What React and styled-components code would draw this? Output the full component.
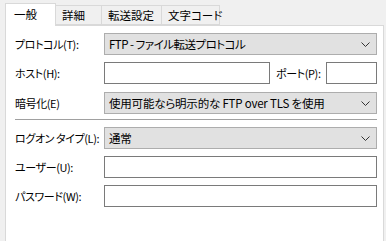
import React from "react";
import styled, { createGlobalStyle } from "styled-components";

const Global = createGlobalStyle`
  html, body {
    margin: 0;
    padding: 0;
    background: #f0f0f0;
    font-family: "Noto Sans CJK JP", "Noto Sans", sans-serif;
    font-size: 12px;
    color: #000;
  }
`;

const Page = styled.div`
  width: 386px;
  height: 241px;
  overflow: hidden;
  padding: 3px 3px 0 5px;
  box-sizing: border-box;
`;

const Tabs = styled.div`
  display: flex;
  align-items: flex-end;
  height: 22px;
  position: relative;
  z-index: 1;
`;

const Tab = styled.div`
  box-sizing: border-box;
  width: ${(p) => p.w}px;
  height: ${(p) => (p.active ? 23 : 20)}px;
  margin-bottom: ${(p) => (p.active ? -1 : 0)}px;
  background: ${(p) => (p.active ? "#fff" : "#f0f0f0")};
  border: 1px solid #d9d9d9;
  border-bottom: ${(p) => (p.active ? "none" : "1px solid #d9d9d9")};
  border-left: ${(p) => (p.first || p.active ? "1px solid #d9d9d9" : "none")};
  display: flex;
  align-items: center;
  padding-left: ${(p) => (p.active ? 8 : 6)}px;
  padding-top: ${(p) => (p.active ? 0 : 1)}px;
  line-height: 1;
  white-space: nowrap;
  font-size: 11.5px;
  font-feature-settings: "palt" 1;
`;

const Panel = styled.div`
  box-sizing: border-box;
  height: 230px;
  width: 379px;
  background: #fff;
  border: 1px solid #d9d9d9;
  padding: 7px 6px 0 9px;
  display: flex;
  flex-direction: column;
`;

const Row = styled.div`
  display: flex;
  align-items: center;
  height: 22px;
  margin-top: ${(p) => p.mt || 0}px;
`;

const Label = styled.div`
  width: 89px;
  flex: none;
  white-space: nowrap;
  font-size: 11px;
  letter-spacing: -0.4px;
  font-feature-settings: "palt" 1;
`;

const Select = styled.div`
  box-sizing: border-box;
  flex: 1;
  height: 22px;
  background: #e1e1e1;
  border: 1px solid #adadad;
  display: flex;
  align-items: center;
  padding-left: 4px;
  padding-right: 6px;
  white-space: nowrap;
`;

const SelectText = styled.span`
  flex: 1;
  font-size: 11.5px;
  letter-spacing: ${(p) => (p.tight ? -0.5 : -0.2)}px;
  font-feature-settings: "palt" 1;
`;

const Input = styled.div`
  box-sizing: border-box;
  height: 22px;
  border: 1px solid #7a7a7a;
  background: #fff;
  flex: ${(p) => (p.w ? "none" : 1)};
  width: ${(p) => (p.w ? `${p.w}px` : "auto")};
`;

const Separator = styled.div`
  height: 1px;
  background: #a0a0a0;
  border-bottom: 1px solid #fff;
  margin-top: 5px;
`;

const PortLabel = styled(Label)`
  margin-left: 6px;
  width: 50px;
`;

function Chevron() {
  return (
    <svg width="9" height="5" viewBox="0 0 9 5">
      <path d="M0.5 0.5 L4.5 4.5 L8.5 0.5" fill="none" stroke="#333" strokeWidth="1" />
    </svg>
  );
}

function Dropdown({ children, tight }) {
  return (
    <Select>
      <SelectText tight={tight}>{children}</SelectText>
      <Chevron />
    </Select>
  );
}

export default function App() {
  return (
    <>
      <Global />
      <Page>
        <Tabs>
          <Tab w={51} active first>一般</Tab>
          <Tab w={46}>詳細</Tab>
          <Tab w={60}>転送設定</Tab>
          <Tab w={58}>文字コード</Tab>
        </Tabs>
        <Panel>
          <Row>
            <Label>プロトコル(T):</Label>
            <Dropdown tight>FTP - ファイル転送プロトコル</Dropdown>
          </Row>
          <Row mt={7}>
            <Label>ホスト(H):</Label>
            <Input w={166} />
            <PortLabel>ポート(P):</PortLabel>
            <Input />
          </Row>
          <Row mt={8}>
            <Label>暗号化(E)</Label>
            <Dropdown>使用可能なら明示的な FTP over TLS を使用</Dropdown>
          </Row>
          <Separator />
          <Row mt={6}>
            <Label>ログオン タイプ(L):</Label>
            <Dropdown>通常</Dropdown>
          </Row>
          <Row mt={7}>
            <Label>ユーザー(U):</Label>
            <Input />
          </Row>
          <Row mt={7}>
            <Label>パスワード(W):</Label>
            <Input />
          </Row>
        </Panel>
      </Page>
    </>
  );
}
